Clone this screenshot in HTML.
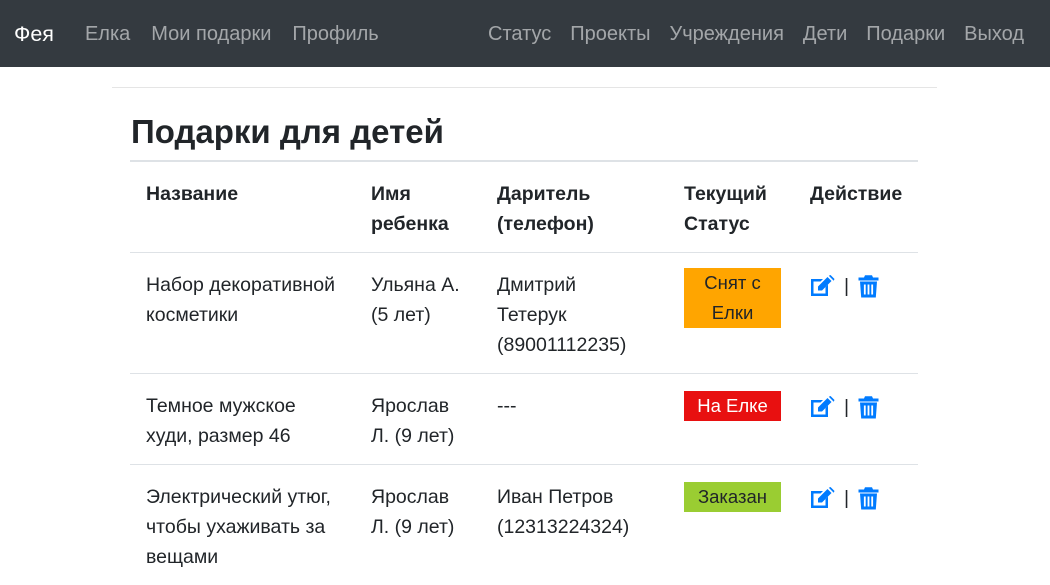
<!DOCTYPE html><html><head><meta charset="utf-8"><style>
body{margin:0;font-family:"Liberation Sans","DejaVu Sans",sans-serif;font-size:19.5px;color:#212529;background:#fff}
nav{height:67px;background:#343a40;display:flex;align-items:center;padding:1px 14px 0;box-sizing:border-box;font-size:20px}
nav .b{color:#fff;font-size:21.5px;margin-right:31px}
nav a{color:rgba(255,255,255,.55);margin-right:21px;text-decoration:none}
nav .r{margin-left:auto}nav .r a{margin-right:19px}nav .r a:last-child{margin-right:12px}
hr{position:absolute;top:87px;left:112px;width:825px;margin:0;border:0;border-top:1px solid #e5e5e5}
h1{position:absolute;top:109px;left:131px;margin:0;font-size:33px;font-weight:bold;line-height:46px}
table{position:absolute;top:160px;left:130px;width:788px;border-collapse:collapse;line-height:30px;table-layout:fixed}
th,td{text-align:left;vertical-align:top;padding:17px 16px 13px;border-top:1px solid #dee2e6}
th{border-top:0;border-bottom:1px solid #dee2e6;font-weight:bold;padding-top:17px}
thead tr{border-top:2px solid #dee2e6}
.s{display:inline-block;width:97px;text-align:center;line-height:30px;font-size:18.5px;margin-top:-2px}
.ic{display:inline-flex;align-items:center;gap:3px;color:#007bff;padding-top:1px}
.ic span{color:#212529;margin:0 6px 0 5px}
</style></head><body>
<nav><span class="b">Фея</span><a>Елка</a><a>Мои подарки</a><a>Профиль</a>
<div class="r"><a>Статус</a><a>Проекты</a><a>Учреждения</a><a>Дети</a><a>Подарки</a><a>Выход</a></div></nav>
<hr><h1>Подарки для детей</h1>
<table><colgroup><col style="width:225px"><col style="width:126px"><col style="width:187px"><col style="width:126px"><col style="width:124px"></colgroup>
<thead><tr><th>Название</th><th>Имя<br>ребенка</th><th>Даритель<br>(телефон)</th><th>Текущий<br>Статус</th><th>Действие</th></tr></thead>
<tbody>
<tr><td>Набор декоративной<br>косметики</td><td>Ульяна А.<br>(5 лет)</td><td>Дмитрий<br>Тетерук<br>(89001112235)</td><td><span class="s" style="background:#ffa500">Снят с<br>Елки</span></td><td>ICONS</td></tr>
<tr><td>Темное мужское<br>худи, размер 46</td><td>Ярослав<br>Л. (9 лет)</td><td>---</td><td><span class="s" style="background:#e81010;color:#fff">На Елке</span></td><td>ICONS</td></tr>
<tr><td>Электрический утюг,<br>чтобы ухаживать за<br>вещами</td><td>Ярослав<br>Л. (9 лет)</td><td>Иван Петров<br>(12313224324)</td><td><span class="s" style="background:#9acd32">Заказан</span></td><td>ICONS</td></tr>
</tbody></table>
<script>
var ic='<span class="ic"><svg width="26" height="22" viewBox="0 0 26 22"><path d="M1 4h12l-2.5 2.5H3.5v12h12v-6.5l2.5-2.5v11.5H1z" fill="#007bff"/><path d="M8 11.5l9.5-9.5 4 4-9.5 9.5H8z" fill="#007bff"/><path d="M18.8 0.8l1.7-0.8 4 4-0.8 1.7z" fill="#007bff"/></svg><span>|</span><svg width="21" height="23" viewBox="0 0 21 23"><path d="M0.5 2.5h5.5l1-2.3h7l1 2.3h5.5v3H0.5z" fill="#007bff"/><path d="M2 6.5h17l-1.2 16H3.2z" fill="#007bff"/><path d="M6.8 9.5v10M10.5 9.5v10M14.2 9.5v10" stroke="#fff" stroke-width="1.8"/></svg></span>';
document.querySelectorAll('td').forEach(function(t){if(t.textContent=='ICONS')t.innerHTML=ic;});
</script>
</body></html>
